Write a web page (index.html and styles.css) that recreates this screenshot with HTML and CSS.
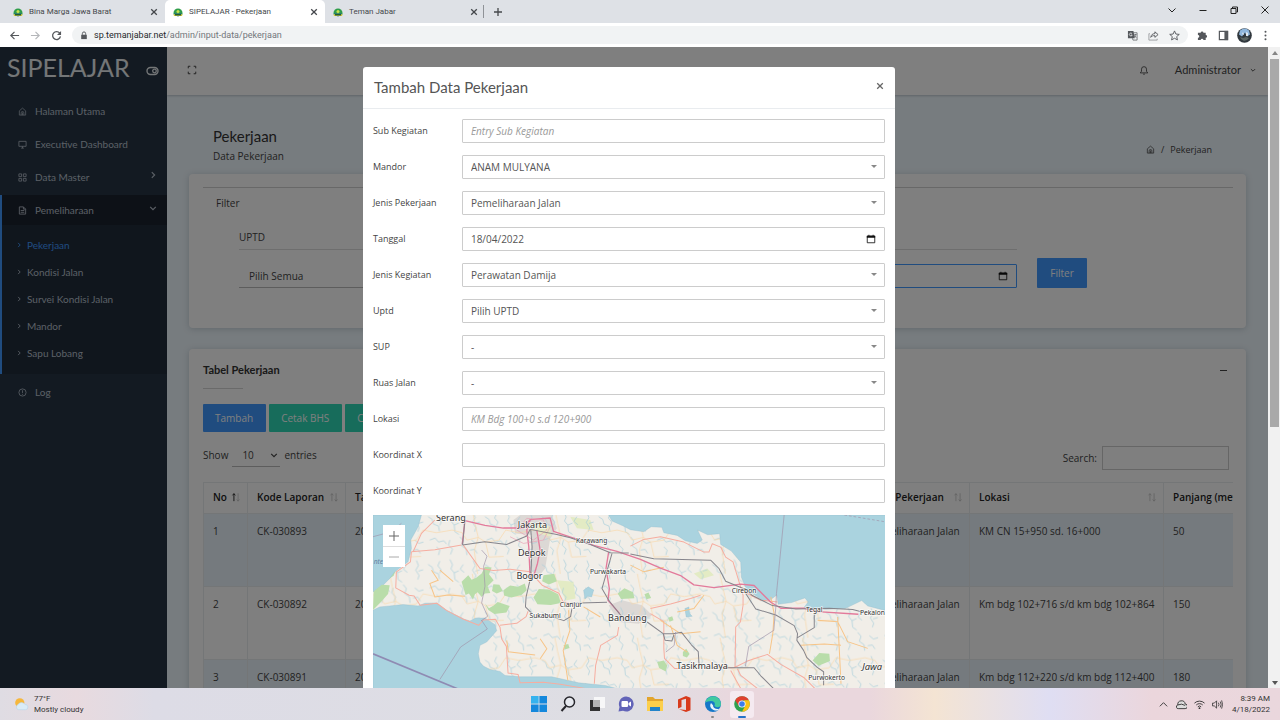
FILE: index.html
```html
<!DOCTYPE html>
<html lang="id">
<head>
<meta charset="utf-8">
<title>SIPELAJAR - Pekerjaan</title>
<link rel="stylesheet" href="styles.css">
</head>
<body>
<svg class="defs" width="0" height="0" aria-hidden="true">
  <symbol id="favicon" viewBox="0 0 20 20"><path d="M1 12a9 9 0 0 1 18 0v3H1z" fill="#2f9e4a"/><path d="M3 13h14v3l-7 3-7-3z" fill="#1d5aa0"/><path d="M1 15q9-3 18 0l-1 3H2z" fill="#d9c83a"/><path d="M4 14h12v3H4z" fill="#1e5e33"/><circle cx="10" cy="9" r="3" fill="#c8e04a"/></symbol>
  <symbol id="x" viewBox="0 0 10 10"><path d="M1.5 1.5l7 7m0-7l-7 7" fill="none" stroke="currentColor" stroke-width="1.6"/></symbol>
  <symbol id="home" viewBox="0 0 20 20"><path d="M3 8.500l7-6 7 6V18H3zM7 18v-5a3 3 0 0 1 6 0v5M10 12v6" fill="none" stroke="currentColor" stroke-width="1.600"/></symbol>
  <symbol id="right" viewBox="0 0 10 10"><path d="M3.500 1.500L7 5 3.500 8.500" fill="none" stroke="currentColor" stroke-width="1.500"/></symbol>
  <symbol id="down" viewBox="0 0 10 10"><path d="M1.500 3.500L5 7l3.500-3.500" fill="none" stroke="currentColor" stroke-width="1.500"/></symbol>
  <symbol id="calendar" viewBox="0 0 12 12"><path d="M1.500 2.500h9v8h-9z" fill="none" stroke="currentColor"/><path d="M1 2h10v2.500H1zM3 1h1v2H3zM8 1h1v2H8z" fill="currentColor"/></symbol>
  <symbol id="sort" viewBox="0 0 12 12"><path d="M3.500 11V2M1.800 4l1.700-2 1.700 2" fill="none" stroke="currentColor"/><path d="M8.500 1.500V11M6.800 9l1.700 2 1.700-2" fill="none" stroke="currentColor"/></symbol>
  <symbol id="sort-asc" viewBox="0 0 12 12"><path d="M3.500 11V2M1.800 4l1.700-2 1.700 2" fill="none" stroke="#333" stroke-width="1.200"/><path d="M8.500 1.500V11M6.800 9l1.700 2 1.700-2" fill="none" stroke="currentColor"/></symbol>
</svg>

<header class="browser">
  <div class="tabstrip">
    <div class="tab"><svg class="fav"><use href="#favicon"/></svg><span>Bina Marga Jawa Barat</span><button aria-label="Close tab"><svg><use href="#x"/></svg></button></div>
    <div class="tab tab-on"><svg class="fav"><use href="#favicon"/></svg><span>SIPELAJAR - Pekerjaan</span><button aria-label="Close tab"><svg><use href="#x"/></svg></button></div>
    <div class="tab"><svg class="fav"><use href="#favicon"/></svg><span>Teman Jabar</span><button aria-label="Close tab"><svg><use href="#x"/></svg></button></div>
    <button class="newtab" aria-label="New tab"><svg viewBox="0 0 10 10"><path d="M5 1v8M1 5h8" stroke="currentColor" stroke-width="1.300"/></svg></button>
    <div class="winbtns">
      <button aria-label="Search tabs"><svg viewBox="0 0 10 10"><path d="M1.500 3.500L5 7l3.500-3.500" fill="none" stroke="currentColor"/></svg></button>
      <button aria-label="Minimize"><svg viewBox="0 0 10 10"><path d="M1.500 5.500h7" stroke="currentColor"/></svg></button>
      <button aria-label="Restore"><svg viewBox="0 0 10 10"><path d="M2 3.500h5v5H2zM3.500 3V2h5v5H7.500" fill="none" stroke="currentColor"/></svg></button>
      <button aria-label="Close window"><svg viewBox="0 0 10 10"><path d="M1.500 1.500l7 7m0-7l-7 7" stroke="currentColor"/></svg></button>
    </div>
  </div>
  <div class="toolbar">
    <button aria-label="Back"><svg viewBox="0 0 12 12"><path d="M11 6H2M6 2L2 6l4 4" fill="none" stroke="currentColor" stroke-width="1.300"/></svg></button>
    <button class="off" aria-label="Forward"><svg viewBox="0 0 12 12"><path d="M1 6h9M6 2l4 4-4 4" fill="none" stroke="currentColor" stroke-width="1.300"/></svg></button>
    <button aria-label="Reload"><svg viewBox="0 0 12 12"><path d="M9.500 3.500A4.300 4.300 0 1 0 10.300 7" fill="none" stroke="currentColor" stroke-width="1.400"/><path d="M11 1v4.500H6.500z" fill="currentColor"/></svg></button>
    <div class="omnibox">
      <svg class="lock" viewBox="0 0 10 10"><path d="M1.500 4h7v5.500h-7z" fill="currentColor"/><path d="M3 4V2.500a2 2 0 0 1 4 0V4" fill="none" stroke="currentColor" stroke-width="1.200"/></svg>
      <span class="url"><b>sp.temanjabar.net</b>/admin/input-data/pekerjaan</span>
      <button aria-label="Translate"><svg viewBox="0 0 12 12"><path d="M1 1h6l1.500 8H1z" fill="currentColor"/><path d="M7 3h4v8H6.500L6 9M8 5h2.500M9 4.500c0 2-.5 3-1.500 3.500M8.500 6l1.500 2.500" fill="none" stroke="currentColor" stroke-width=".8"/><path d="M5.500 4a1.600 1.600 0 1 0 .2 1.500H4.300" fill="none" stroke="#f1f3f4" stroke-width=".8"/></svg></button>
      <button aria-label="Share"><svg viewBox="0 0 12 12"><path d="M2 4H1v7h9V9.500" fill="none" stroke="#9a9da0"/><path d="M3 8c.5-3 2-4 4.500-4V2L11 5 7.500 8V6.200C5.500 6 4 6.500 3 8z" fill="none" stroke="currentColor"/></svg></button>
      <button aria-label="Bookmark"><svg viewBox="0 0 12 12"><path d="M6 1l1.500 3.400 3.700.4-2.800 2.400.8 3.600L6 9l-3.200 1.800.8-3.600L.8 4.800l3.700-.4z" fill="none" stroke="currentColor"/></svg></button>
    </div>
    <button aria-label="Extensions"><svg viewBox="0 0 12 12"><path d="M1 3h3a1.500 1.500 0 1 1 3 0h2.500v2.500a1.500 1.500 0 1 1 0 3V11H7a1.500 1.500 0 0 0-3 0H1V8.500a1.500 1.500 0 0 0 0-3z" fill="currentColor"/></svg></button>
    <button aria-label="Side panel"><svg viewBox="0 0 12 12"><path d="M1.500 1.500h9v9h-9z" fill="none" stroke="currentColor" stroke-width="1.300"/><path d="M7 1h4v10H7z" fill="currentColor"/></svg></button>
    <button class="avatar" aria-label="Profile"><svg viewBox="0 0 15 15"><circle cx="7.500" cy="7.500" r="7.300" fill="#31383e"/><path d="M3 2.500q5-4 9 0l1 4-3 2-2-4-3 4-3-2z" fill="#8fb7de"/><path d="M5 6l1-2 1 3zM9 4l2 1v3H9z" fill="#dfe8f0"/><path d="M3 9l3 1 3-1 3 1-2 2-3 1-3-2z" fill="#5d6765"/></svg></button>
    <button aria-label="Menu"><svg viewBox="0 0 12 12" fill="currentColor"><circle cx="6" cy="2" r="1.100"/><circle cx="6" cy="6" r="1.100"/><circle cx="6" cy="10" r="1.100"/></svg></button>
  </div>
</header>

<div class="viewport">
  <div class="page">
    <aside class="sidebar">
      <div class="brand"><span>SIPELAJAR</span><button aria-label="Toggle menu"><svg viewBox="0 0 14 10"><rect x="1" y="1.500" width="11" height="7" rx="3.500" fill="none" stroke="currentColor" stroke-width="1.400"/><circle cx="8.500" cy="5" r="1.800" fill="none" stroke="currentColor" stroke-width="1.300"/></svg></button></div>
      <nav class="menu">
        <a href="#"><svg><use href="#home"/></svg>Halaman Utama</a>
        <a href="#"><svg viewBox="0 0 20 20"><path d="M2 3h16v11H2zM7 18h6M10 14v4" fill="none" stroke="currentColor" stroke-width="1.800"/></svg>Executive Dashboard</a>
        <a href="#"><svg viewBox="0 0 20 20"><path d="M2 2h6v6H2zM12 2h6v6h-6zM2 12h6v6H2zM12 12h6v6h-6z" fill="none" stroke="currentColor" stroke-width="1.800"/></svg>Data Master<svg class="caret"><use href="#right"/></svg></a>
        <div class="group">
          <a href="#" class="open"><svg viewBox="0 0 20 20"><path d="M3 2h9l5 5v11H3zM12 2v5h5M6 10h8M6 14h8" fill="none" stroke="currentColor" stroke-width="1.900"/></svg>Pemeliharaan<svg class="caret"><use href="#down"/></svg></a>
          <div class="submenu">
            <a href="#" class="current"><svg><use href="#right"/></svg>Pekerjaan</a>
            <a href="#"><svg><use href="#right"/></svg>Kondisi Jalan</a>
            <a href="#"><svg><use href="#right"/></svg>Survei Kondisi Jalan</a>
            <a href="#"><svg><use href="#right"/></svg>Mandor</a>
            <a href="#"><svg><use href="#right"/></svg>Sapu Lobang</a>
          </div>
        </div>
        <a href="#"><svg viewBox="0 0 20 20"><circle cx="10" cy="10" r="8" fill="none" stroke="currentColor" stroke-width="1.800"/><path d="M10 5v6M10 13v2" stroke="currentColor" stroke-width="1.800"/></svg>Log</a>
      </nav>
    </aside>

    <div class="main">
      <div class="topbar">
        <button aria-label="Fullscreen"><svg viewBox="0 0 12 12"><path d="M1.500 4V1.500H4M8 1.500h2.500V4M10.500 8v2.500H8M4 10.500H1.500V8" fill="none" stroke="currentColor" stroke-width="1.200"/></svg></button>
        <button class="bell" aria-label="Notifications"><svg viewBox="0 0 12 12"><path d="M1.500 9.500h9L9 7.500V5a3 3 0 0 0-6 0v2.500zM5 11h2" fill="none" stroke="currentColor"/></svg></button>
        <a href="#" class="user">Administrator<svg><use href="#down"/></svg></a>
      </div>
      <div class="content">
        <div class="pagehead">
          <div><h1>Pekerjaan</h1><p>Data Pekerjaan</p></div>
          <nav class="crumbs"><svg><use href="#home"/></svg><span>/</span><a href="#">Pekerjaan</a></nav>
        </div>

        <section class="card filter-card">
          <hr>
          <p class="filter-title">Filter</p>
          <form class="filters">
            <div class="filter"><label for="f-uptd">UPTD</label><select id="f-uptd" class="line-select"><option>Pilih Semua</option></select></div>
            <div class="filter"><label for="f-date">Tanggal</label><div class="datebox"><input id="f-date" type="text"><svg><use href="#calendar"/></svg></div></div>
            <button class="btn blue filter-btn" type="button">Filter</button>
          </form>
        </section>

        <section class="card table-card">
          <div class="card-title"><h2>Tabel Pekerjaan</h2><button aria-label="Collapse"><svg viewBox="0 0 8 8"><path d="M0 4.500h7" stroke="currentColor"/></svg></button></div>
          <div class="actions"><button class="btn blue">Tambah</button><button class="btn green">Cetak BHS</button><button class="btn green">Cetak BHS</button></div>
          <div class="tools">
            <div class="length"><label for="len">Show</label><div class="lenbox"><select id="len"><option>10</option></select><svg><use href="#down"/></svg></div><span>entries</span></div>
            <div class="search"><label for="q">Search:</label><input id="q" type="text"></div>
          </div>
          <div class="tablewrap">
            <table>
              <colgroup><col class="c-no"><col class="c-code"><col class="c-date"><col class="c-who"><col class="c-job"><col class="c-loc"><col class="c-len"></colgroup>
              <thead><tr><th><div>No <svg><use href="#sort-asc"/></svg></div></th><th><div>Kode Laporan <svg><use href="#sort"/></svg></div></th><th>Tanggal</th><th></th><th><div>Jenis Pekerjaan <svg><use href="#sort"/></svg></div></th><th><div>Lokasi <svg><use href="#sort"/></svg></div></th><th>Panjang (meter)</th></tr></thead>
              <tbody>
                <tr><td>1</td><td>CK-030893</td><td>2022-04-18</td><td></td><td>Pemeliharaan Jalan</td><td>KM CN 15+950 sd. 16+000</td><td>50</td></tr>
                <tr><td>2</td><td>CK-030892</td><td>2022-04-18</td><td></td><td>Pemeliharaan Jalan</td><td>Km bdg 102+716 s/d km bdg 102+864</td><td>150</td></tr>
                <tr><td>3</td><td>CK-030891</td><td>2022-04-18</td><td></td><td>Pemeliharaan Jalan</td><td>Km bdg 112+220 s/d km bdg 112+400</td><td>180</td></tr>
              </tbody>
            </table>
          </div>
        </section>
      </div>
    </div>

    <div class="backdrop">
      <div class="modal" role="dialog" aria-labelledby="modal-title">
        <div class="modal-head"><h3 id="modal-title">Tambah Data Pekerjaan</h3><button aria-label="Close"><svg><use href="#x"/></svg></button></div>
        <form class="modal-body">
          <div class="row"><label for="sub">Sub Kegiatan</label><input id="sub" type="text" placeholder="Entry Sub Kegiatan"></div>
          <div class="row"><label for="mandor">Mandor</label><div class="pick"><select id="mandor"><option>ANAM MULYANA</option></select></div></div>
          <div class="row"><label for="jenis">Jenis Pekerjaan</label><div class="pick"><select id="jenis"><option>Pemeliharaan Jalan</option></select></div></div>
          <div class="row"><label for="tgl">Tanggal</label><div class="datebox"><input id="tgl" type="text" value="18/04/2022"><svg><use href="#calendar"/></svg></div></div>
          <div class="row"><label for="keg">Jenis Kegiatan</label><div class="pick"><select id="keg"><option>Perawatan Damija</option></select></div></div>
          <div class="row"><label for="uptd">Uptd</label><div class="pick"><select id="uptd"><option>Pilih UPTD</option></select></div></div>
          <div class="row"><label for="sup">SUP</label><div class="pick"><select id="sup"><option>-</option></select></div></div>
          <div class="row"><label for="ruas">Ruas Jalan</label><div class="pick"><select id="ruas"><option>-</option></select></div></div>
          <div class="row"><label for="lok">Lokasi</label><input id="lok" type="text" placeholder="KM Bdg 100+0 s.d 120+900"></div>
          <div class="row"><label for="kx">Koordinat X</label><input id="kx" type="text"></div>
          <div class="row"><label for="ky">Koordinat Y</label><input id="ky" type="text"></div>
          <div class="map">
            <svg class="mapart" viewBox="10 15 1532 519" preserveAspectRatio="xMidYMin slice">
              <defs>
                <pattern id="rivers" width="170" height="143" patternUnits="userSpaceOnUse"><path d="M5 20l12 8 4 14 15 6 3 16M40 10l-6 14 10 12-4 10M70 5l8 16-5 12 10 12 2 20 12 8M83 45l14-6M110 20l-9 14 12 10M140 8l6 15-8 14 10 16-4 12M146 40l14-4M10 90l16-6 10 12 16-4 8 10M30 110l10 10-4 15M70 90l-4 15 12 12-6 16M100 80l10 12-5 15 14 10 2 18M135 90l12 10 14-4M130 120l14-2 8 12" fill="none" stroke="#a3ccda" stroke-width="2"/></pattern>
                <pattern id="lanes" width="247" height="191" patternUnits="userSpaceOnUse"><path d="M0 60l30 8 14 22 34-8 22 14 40-6 20-30 40 8 47-8M60 0l8 40 10 42-12 40 10 69M100 96l10 45 44-2" fill="none" stroke="#f9d7a6" stroke-width="2"/></pattern>
              </defs>
              <path d="M10 15h1532v519H10z" fill="#f1eee8"/>
              <g fill="#dcd8d5"><path d="M430 30l20-15h95l15 40-20 30-15 90-25 30-20-30 5-100-50-5z"/><path d="M715 285l40-15 60 15 30 30-40 25-60-5z"/></g>
              <g fill="#e3ebc4"><path d="M480 35l60 15 4 30-40-10zM600 20l60 10 10 30-50-5zM970 190l40-15 20 20-40 12zM560 210l50 5 6 50-30 6z"/></g>
              <path d="M10 15h1532v519H10z" fill="url(#rivers)"/>
              <path d="M10 15h1532v519H10z" fill="url(#lanes)"/>
              <g fill="#b9ddaa">
                <path d="M275 215l20-20 10 14 14-6 16-13 10-20 20 2-8 20 14 18-18 18 8 20-16 2-10 10-12-14-8 6-6 16-12-18-10 4zM370 222l18 2 10 18-18 8-14-8zM400 240l20-14 24 4 20-10 6 20-16 14-30 8-22-6zM345 280l12 14 14-8 12-11 36 12-10 20-36 4-18-12z"/><path d="M490 262l16-26 30 2 28 14 8 26-30 6-40-2zM520 195l32-4 8 22-24 10-20-10zM742 250l20-16 26 12 4 18-40 2zM50 185l20-20 10 8-8 24-18 12z"/>
                <path d="M860 455l20-5 10 15-4 18-20-10zM937 425l10-10 10 16-8 10-12-4zM1325 450l20-22 30 2 2 22-34 14zM822 252l12-5 8 16-14 4zM893 322l12-4 4 12-12 4zM580 405l14-4 4 12-14 4z"/>
              </g>
              <g fill="#aad3df" stroke="#8eb9cb" stroke-width="1">
                <path d="M10 15h145l-10 35-22 40 2 25-10 40-40 30-15 20-20 20-30 20z"/>
                <path d="M10 300l20-10 30-3 40-4 45 4 20-8 35-1 30 22 50 26 20 6 16-8 29-1 30 20 5 18-30 34-20 10-5 25 5 25 10 12 20 10 30 6 15 12 45 4 95 0 80 18 80 8 60 16H10z"/>
                <path d="M715 15l10 18 32 14 23 12 40 6 22-15 32 2 6 16 40 8 24 16 36 8 15-10-14-30 30 14 36-3 3 32 32 20 28 33 2 45 16 38 22 14 32 20 18-5 18-14 4 28 40-5 40-14 10 12-12 16 62 6 60-2 50-24 18 16 54 14V15z"/>
                <path d="M640 240l14-10 16 10-6 20-12-2-8 8zM943 295l12-5 2 20 8 8-18 2z"/>
              </g>
              <path d="M12 244l24-20 24 1-5 26-22 25-23 23z" fill="#b9ddaa"/>
              <g fill="none" stroke="#f6ada0" stroke-width="3" stroke-linejoin="round">
                <path d="M125 125l-3 30-42 30-2 48 40 22 15 2 18 28 50-6 30 22 50 26 45 18 14-16 36-2 14 24 5 35 14 22 5 80 30 4 6 25 70-2 50 6 80 14 60 6M125 125l70-6 80-14M195 30l-40 40-25 55M390 345l50-6 28-20 6-16M330 175l40 6 50-4 60 8M480 185l36 40 50 24 12 24 24 8M745 350l-4 25-50 30-15 60-4 55M280 105l50 70M780 108l40-20 50-8 70 16 60 30 15 0 10-25 25 10 15 30 22 14 30 100 0 30-8 50-14 15-2 120M840 295l60-14 60-16 30-10M840 310l40 24 0 80 2 30 30 30 40 0M1110 240l60 30 50 5M1050 472l40 0 40-20 60-20 40 30 70 40 40 40M1080 480l30 54M1100 475l10 20 50 39"/>
              </g>
              <g fill="none" stroke="#f7c487" stroke-width="3"><path d="M185 180l20 30-25 10 15 40 40-6 50 4M210 180l40 34M410 390l5 34 80 10M510 385l20 30-20 30M595 300l4 60-20 60 14 90M640 290l50 30M900 345l20 60 30 20M1200 260l10 50-4 60-10 60M1340 330l60 4 30 60 60 20M1400 320l10 200M1290 405l70-4 50 4M780 165l40 20 60-14M870 330l60 40 60-6M1000 255l-30 40-50 10"/></g>
              <g fill="none" stroke="#e37a9b" stroke-width="4" stroke-linejoin="round"><path d="M285 32l60 14 55 8 60 0 20-25 60-5 10 40 60 20 60 22 70 18 70 24 60 26 60 22 40 28 60 8 80-10 40 4 50 50 30 18 70 0 40 10 122 8M285 32l-8 70M480 30l-10 30 6 50 4 90M500 60l10 60-8 40-12 40M715 125l-8 50 10 60-4 35 35 40"/></g>
              <g fill="none" stroke="#e9a0b4" stroke-width="2"><path d="M440 60l50 30 40-30-10-30-50-5-30 35M420 80l40 20 60-10 20-40"/></g>
              <g fill="none" stroke="#86858c" stroke-width="3" stroke-linejoin="round"><path d="M278 105l66-10 66 8 60-25 10-20 80 15 40 10 60 20 60 25 55 1M780 132l70 14 170 4 25 25 20 38 60 25 20 18 60 30 70 10 100-2 70 4 40 10M278 105l6-65M482 60l4 50-4 90-14 60-2 30 20 20M600 279l110-3M605 295l-4 24-20 12-50-16M725 130l-30 105 20 35 40 50M830 335l48 35 30 0 25-4 30 38 20 20 3 50M878 370l6 20 20 2 6-18M1125 250l30 46 60 18 55 32 10 24-2 20 20 30 10 22 30 28 20 14 0 40M1060 472l90 0 20 24 40 40M1330 312l0 40-50 30"/></g>
              <g fill="none" stroke="#a193a9" stroke-width="2"><path d="M335 120l16 18-10 30 4 60-10 50 18 40-20 14M335 330l17 26-80 54-62 97M1240 15l-23 235-2 40-6 70-75 48-10 60M10 80l55-15 30-25M915 365l-4 40-25 20"/><path d="M1420 15l120 20" stroke-dasharray="8 6"/><path d="M10 430l270 112" stroke-width="5" stroke="#8f8bb3"/></g>
              <g class="labels big"><text x="243" y="32">Serang</text><text x="487" y="54">Jakarta</text><text x="485" y="137">Depok</text><text x="478" y="207">Bogor</text><text x="771" y="331">Bandung</text><text x="995" y="475">Tasikmalaya</text></g>
              <g class="labels small"><text x="664" y="98">Karawang</text><text x="713" y="191">Purwakarta</text><text x="602" y="289">Cianjur</text><text x="525" y="323">Sukabumi</text><text x="1120" y="248">Cirebon</text><text x="1330" y="304">Tegal</text><text x="1504" y="314">Pekalon</text><text x="1367" y="509">Purwokerto</text></g>
              <text class="region" x="1503" y="479">Jawa</text><text class="strait" x="12" y="162">nte</text>
            </svg>
            <div class="zoomer"><button type="button" aria-label="Zoom in"><svg viewBox="0 0 10 10"><path d="M5 0v10M0 5h10" stroke="#666"/></svg></button><button type="button" aria-label="Zoom out"><svg viewBox="0 0 10 10"><path d="M0 5h10" stroke="#aaa"/></svg></button></div>
          </div>
        </form>
      </div>
    </div>
  </div>
  <div class="scrollbar"><i class="up"></i><div class="thumb"></div><i class="dn"></i></div>
</div>

<footer class="taskbar">
  <div class="weather"><svg viewBox="0 0 26 26"><circle cx="10" cy="10" r="8" fill="#f6b73c"/><path d="M7 22a5 5 0 0 1 0-9 7 7 0 0 1 12 0 4.500 4.500 0 0 1 1 9z" fill="#d9ebf7" stroke="#b5d3ea"/></svg><div>77°F<br>Mostly cloudy</div></div>
  <div class="apps">
    <button aria-label="Start"><svg viewBox="0 0 16 16" fill="#1488dc"><path d="M0 0h7.600v7.600H0z" fill="#35b2ee"/><path d="M8.400 0H16v7.600H8.400zM0 8.400h7.600V16H0zM8.400 8.400H16V16H8.400z"/></svg></button>
    <button aria-label="Search"><svg viewBox="0 0 16 16"><circle cx="9.500" cy="6" r="5" fill="#e7e9ef" stroke="#26262b" stroke-width="1.500"/><path d="M6 10l-4.500 5" stroke="#26262b" stroke-width="2"/></svg></button>
    <button aria-label="Task view"><svg viewBox="0 0 16 16"><path d="M5 1h11v11H5z" fill="#f7f7f8"/><path d="M1 4h10v11H1z" fill="#333"/><path d="M4 4h7v7H4z" fill="#b7b7b7"/></svg></button>
    <button aria-label="Chat"><svg viewBox="0 0 16 16"><path d="M8 .5a7.500 7.500 0 1 1-3 14.300L.5 15.500 1.500 11A7.500 7.500 0 0 1 8 .5z" fill="#6264b8"/><rect x="3.500" y="5" width="6.500" height="6" rx="1" fill="#fff"/><path d="M10.500 7l2.500-1.500v5L10.500 9z" fill="#fff"/></svg></button>
    <button aria-label="File Explorer"><svg viewBox="0 0 16 16"><path d="M0 1h6l2 2h8v12H0z" fill="#e2a52d"/><path d="M0 5h16v10H0z" fill="#fccf4c"/><path d="M3 11h10v4H3z" fill="#2283c9"/></svg></button>
    <button aria-label="Office"><svg viewBox="0 0 16 16"><path d="M10 0l4.500 1.800v12.400L10 16l-7-2.800 7 .8V2.800L5.500 4v7L2 12.500v-9z" fill="#d83b1c"/></svg></button>
    <button aria-label="Edge" class="running"><svg viewBox="0 0 16 16"><circle cx="8" cy="8" r="8" fill="#1677c8"/><path d="M.2 6.500A8 8 0 0 1 16 8c0 4-6 4-6.500 1.500 1-2 0-4.500-3.500-4.500-2.500 0-4.500 1-5.800 1.500z" fill="#40c9a0"/><path d="M6 7c-2 3 0 6.500 4 7.500 2 .4 3.500-.5 4.500-1.800-3 1-6.500-.2-6.500-3.400z" fill="#e8f3fb"/></svg></button>
    <button aria-label="Chrome" class="active"><svg viewBox="0 0 16 16"><circle cx="8" cy="8" r="7.800" fill="#2fa24f"/><path d="M1.200 4.200A7.800 7.800 0 0 1 14.900 4.300L8 4.500 4.800 10z" fill="#e0402f"/><path d="M14.900 4.300A7.800 7.800 0 0 1 8 15.800l3.300-6L10 4.300z" fill="#fbc116"/><circle cx="8" cy="8" r="3.600" fill="#fff"/><circle cx="8" cy="8" r="2.800" fill="#3b7ded"/></svg></button>
  </div>
  <div class="tray">
    <svg viewBox="0 0 12 12"><path d="M2 8l4-4 4 4" fill="none" stroke="currentColor"/></svg>
    <svg viewBox="0 0 12 12"><path d="M3 10.500a2 2 0 0 1-1-4 4 4 0 0 1 8-1 2.500 2.500 0 0 1 0 5z" fill="#ddd" stroke="currentColor"/><path d="M2 6.500q4-2 8 .5" fill="none" stroke="currentColor"/></svg>
    <svg viewBox="0 0 12 12"><path d="M.5 4.500a8 8 0 0 1 11 0M2.500 6.500a5 5 0 0 1 7 0M4.200 8.500a2.500 2.500 0 0 1 3.600 0" fill="none" stroke="currentColor"/><circle cx="6" cy="10" r="1" fill="currentColor"/></svg>
    <svg viewBox="0 0 12 12"><path d="M.5 4.500h2L5 2v8L2.500 7.500h-2zM7 4q1.200 2 0 4M9 2.800q2 3.200 0 6.400M10.500 1.500q2 4.500 0 9" fill="none" stroke="currentColor" stroke-width=".9"/></svg>
    <div class="clock">8:39 AM<br>4/18/2022</div>
  </div>
</footer>
</body>
</html>
```
FILE: styles.css
```css
* { box-sizing: border-box; }
html, body { height: 100%; }
body { margin: 0; display: flex; flex-direction: column; overflow: hidden; font: 10px/14px "Open Sans", "Noto Sans", sans-serif; color: #444; }
button { border: 0; background: none; padding: 0; color: inherit; font: inherit; display: flex; align-items: center; justify-content: center; }
input, select { font: inherit; color: inherit; border-radius: 0; min-width: 0; }
select { appearance: none; }
a { color: inherit; text-decoration: none; }
h1, h2, h3, p { margin: 0; font-weight: 400; }
svg { display: block; flex: none; }
.defs { position: absolute; }

/* browser frame */
.browser { flex: none; font-family: Roboto, sans-serif; font-size: 8px; color: #45484c; }
.tabstrip { display: flex; align-items: stretch; height: 23px; padding-left: 5px; background: #dee1e6; }
.tab { display: flex; align-items: center; gap: 6px; width: 160px; padding: 0 7px 0 8px; }
.tab span { flex: 1; white-space: nowrap; }
.tab-on { background: #fff; border-radius: 5px 5px 0 0; }
.fav { width: 10px; height: 10px; }
.tab button svg { width: 8px; height: 8px; }
.newtab { width: 28px; border-left: 1px solid #8f9297; margin: 5px 0 5px -2px; }
.newtab svg { width: 10px; height: 10px; }
.winbtns { display: flex; margin-left: auto; color: #222; }
.winbtns button { width: 31px; padding-bottom: 4px; }
.winbtns svg { width: 10px; height: 10px; }
.toolbar { display: flex; align-items: center; height: 24px; background: #fff; padding: 0 4px; color: #55585c; }
.toolbar button { width: 21px; height: 18px; }
.toolbar svg { width: 11px; height: 11px; }
.toolbar .off { color: #b5b7ba; }
.omnibox { flex: 1; display: flex; align-items: center; height: 18px; margin: 0 4px 0 5px; border-radius: 9px; background: #f1f3f4; padding: 0 3px 0 8px; }
.omnibox .lock { width: 8px; height: 9px; }
.url { flex: 1; margin-left: 6px; font-size: 9px; color: #73777b; }
.url b { font-weight: 400; color: #26282b; }
.toolbar .avatar svg { width: 15px; height: 15px; }

/* page */
.viewport { flex: 1; min-height: 0; display: flex; }
.page { flex: 1; min-width: 0; display: flex; position: relative; overflow: hidden; background: #eff8fe; }
.scrollbar { width: 12px; flex: none; display: flex; flex-direction: column; align-items: center; background: #f1f1f1; padding: 4px 1px 3px 2px; }
.thumb { width: 100%; height: 58%; margin-top: 4px; margin-bottom: auto; background: #a9a9a9; }
.up, .dn { border: 3px solid transparent; }
.up { border-top-width: 0; border-bottom: 4px solid #858585; }
.dn { border-bottom-width: 0; border-top: 4px solid #555; }

.sidebar { width: 167px; flex: none; background: #263544; color: #b7c0cd; font-family: Lato, sans-serif; }
.brand { display: flex; align-items: center; justify-content: space-between; height: 47px; padding: 0 7px; font-size: 25px; line-height: 40px; color: #e8ecef; }
.brand span { margin-bottom: 8px; }
.brand svg { width: 14px; height: 10px; }
.menu { display: flex; flex-direction: column; gap: 3px; padding-top: 2px; }
.menu a { display: flex; align-items: center; gap: 8px; height: 30px; padding: 0 10px 0 18px; font-size: 10px; }
.menu a svg { width: 9px; height: 9px; }
.menu .caret { margin: 0 0 4px auto; width: 8px; height: 8px; }
.group { border-left: 2px solid #4099ff; background: #202c3a; }
.menu .group a { padding-left: 16px; }
.menu .open { background: #1b222e; }
.submenu { padding: 6px 0 8px; }
.menu .submenu a { height: 27px; gap: 5px; padding-left: 14px; }
.menu .submenu svg { width: 6px; height: 6px; }
.menu .submenu .current { color: #4099ff; }

.main { flex: 1; min-width: 0; display: flex; flex-direction: column; }
.topbar { display: flex; align-items: center; height: 48px; flex: none; padding: 0 12px 3px 20px; background: #fff; box-shadow: 0 1px 2px rgba(69, 90, 100, .3); font-family: Lato, sans-serif; font-size: 11px; }
.topbar svg { width: 10px; height: 10px; }
.bell { margin-left: auto; }
.user { display: flex; align-items: center; gap: 9px; margin-left: 26px; }
.topbar .user svg { width: 6px; height: 6px; }
.content { flex: 1; padding: 31px 22px 0; }
.pagehead { display: flex; justify-content: space-between; align-items: center; padding: 0 34px 0 24px; margin-bottom: 9px; }
.pagehead h1 { font: 15px/20px Lato, sans-serif; color: #333; }
.pagehead p { line-height: 18px; padding-top: 1px; font-size: 10px; }
.crumbs { display: flex; align-items: center; gap: 6px; padding-top: 8px; font-size: 9px; }
.crumbs svg { width: 9px; height: 9px; }
.card { background: #fff; border-radius: 4px; box-shadow: 0 1px 6px rgba(69, 90, 100, .25); }
.filter-card { height: 154px; padding: 13px 13px 0 14px; }
.filter-card hr { border: 0; border-top: 1px solid #d0d0d0; margin: 0; }
.filter-title { padding: 8px 0 0 13px; }
.filters { display: flex; align-items: flex-start; gap: 20px; padding: 20px 146px 0 36px; }
.filter { flex: 1; }
.filter label { display: block; height: 20px; line-height: 14px; border-bottom: 1px solid #ddd; }
.line-select { width: 100%; height: 24px; margin-top: 14px; border: 0; border-bottom: 1px solid #bbb; padding: 0 10px; background: none; }
.filter .datebox { margin-top: 14px; }
.filter .datebox input { border: 1px solid #4099ff; border-radius: 1px; }
.btn { height: 28px; padding: 0 12px; color: #fff; font-size: 10px; border-radius: 1px; }
.blue { background: #4099ff; }
.green { background: #2ed8b6; }
.filter-btn { width: 50px; height: 30px; margin-top: 28px; }
.table-card { margin-top: 21px; padding: 12px 13px 0 14px; height: 400px; }
.card-title { display: flex; justify-content: space-between; padding-right: 5px; }
.card-title h2 { font: 700 11px/18px Lato, sans-serif; color: #333; }
.card-title h2::after { content: ""; display: block; width: 40px; height: 1px; background: #d5d5d5; margin-top: 9px; }
.card-title button { height: 18px; }
.card-title svg { width: 8px; height: 8px; }
.actions { display: flex; gap: 3px; margin-top: 15px; }
.actions .btn { padding: 0 13px 0 12px; }
.tools { display: flex; justify-content: space-between; align-items: flex-start; height: 50px; padding-top: 11px; }
.length, .search { display: flex; align-items: center; }
.lenbox { position: relative; margin: 0 4px; }
.lenbox svg { position: absolute; right: 2px; top: 8px; width: 8px; height: 8px; }
.lenbox select { display: block; width: 48px; height: 24px; border: 0; border-bottom: 1px solid #bbb; padding: 0 10px; background: none; }
.search { padding-top: 3px; }
.search input { width: 127px; height: 24px; margin: 0 4px 0 5px; border: 1px solid #ccc; background: none; }
.tablewrap { overflow: hidden; }
table { table-layout: fixed; width: 1090px; border-collapse: collapse; }
.c-no { width: 44px; }
.c-code { width: 98px; }
.c-date { width: 160px; }
.c-who { width: 355px; }
.c-job { width: 109px; }
.c-loc { width: 194px; }
.c-len { width: 130px; }
th, td { border: 1px solid #e9ecef; text-align: left; vertical-align: top; padding: 7px 9px; white-space: nowrap; }
th { font-weight: 600; height: 31px; color: #222; }
th div { display: flex; justify-content: space-between; align-items: center; }
th svg { width: 10px; height: 10px; color: #c4c4c4; margin-right: -3px; }
td { height: 73px; padding-top: 10px; }
tbody tr:nth-child(odd) { background: #ebf5fc; }

/* dialog */
.backdrop { position: absolute; inset: 0; background: rgba(0, 0, 0, .5); display: flex; justify-content: center; align-items: flex-start; padding: 20px 10px 0 0; overflow: hidden; }
.modal { width: 42.3%; min-width: 420px; background: #fff; border-radius: 3px; }
.modal-head { display: flex; align-items: flex-start; justify-content: space-between; height: 42px; padding: 10px 11px 0; border-bottom: 1px solid #e9ecef; }
.modal-head h3 { font: 15px/20px Lato, sans-serif; color: #555; }
.modal-head button { height: 18px; color: #666; }
.modal-head svg { width: 8px; height: 8px; }
.modal-body { display: flex; flex-direction: column; gap: 12px; padding: 10px; }
.row { display: grid; grid-template-columns: 89px 1fr; align-items: center; }
.row label { font-size: 9px; }
.row input, .row select, .datebox input { width: 100%; height: 24px; border: 1px solid #ccc; border-radius: 1px; background: #fff; padding: 0 8px; color: #555; }
.row input::placeholder { font-style: italic; color: #999; opacity: 1; }
.pick, .datebox { position: relative; }
.pick::after { content: ""; position: absolute; right: 8px; top: 10px; border: 3px solid transparent; border-bottom: 0; border-top-color: #888; }
.datebox svg { position: absolute; right: 9px; top: 7px; width: 10px; height: 10px; color: #111; }
.map { position: relative; }
.mapart { width: 100%; aspect-ratio: 1532 / 519; }
.labels text, .region, .strait { font-family: "Noto Sans", sans-serif; text-anchor: middle; paint-order: stroke; stroke: #fff; stroke-opacity: .7; stroke-width: 5px; stroke-linejoin: round; fill: #333; }
.big text { font-size: 27px; }
.small text { font-size: 20px; }
.region { font-size: 28px; font-style: italic; }
.strait { font-size: 20px; font-style: italic; text-anchor: start; stroke: none; fill: #6480a0; }
.zoomer { position: absolute; left: 10px; top: 10px; width: 22px; background: #fff; }
.zoomer button { width: 22px; height: 21px; }
.zoomer button + button { border-top: 1px solid #ddd; }
.zoomer svg { width: 10px; height: 10px; }

/* taskbar */
.taskbar { height: 32px; flex: none; display: grid; grid-template-columns: 1fr auto 1fr; align-items: center; font: 8px/11px Roboto, sans-serif; color: #333; background: linear-gradient(90deg, #dfdce3, #e8dadf 6%, #dddce6 12%, #dedee3 50%, #ead7dd 58%, #ead7dd 68%, #f4e4d3 73%, #dfdef3 82%, #ebd6dc 90%, #ead7dd); }
.weather { display: flex; align-items: center; gap: 5px; padding-left: 14px; }
.weather svg { width: 15px; height: 15px; }
.apps { display: flex; gap: 5px; }
.apps button { position: relative; width: 24px; height: 27px; border-radius: 3px; }
.apps svg { width: 16px; height: 16px; }
.apps .active { background: #f5eaf0; }
.apps .running::after, .apps .active::after { content: ""; position: absolute; bottom: 0; left: 50%; margin-left: -2px; width: 3px; height: 2px; border-radius: 1px; background: #888; }
.apps .active::after { width: 8px; margin-left: -4px; background: #2672c8; }
.tray { display: flex; align-items: center; justify-content: flex-end; gap: 7px; padding-right: 10px; }
.tray svg { width: 11px; height: 11px; }
.clock { text-align: right; margin-left: 2px; }
```
